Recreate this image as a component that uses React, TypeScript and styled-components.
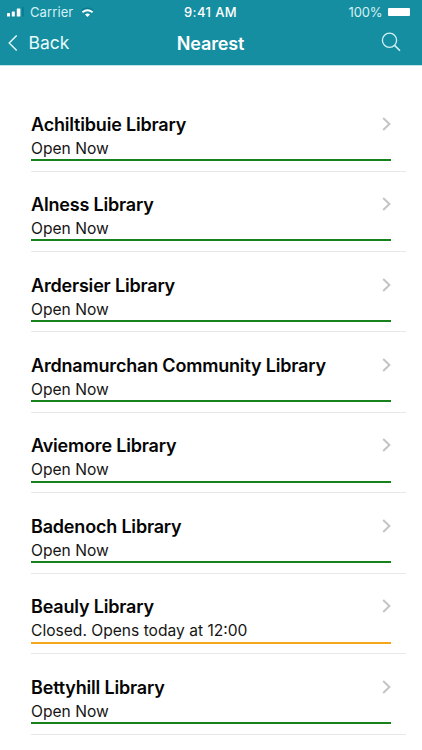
import React from "react";
import styled, { createGlobalStyle } from "styled-components";

const GlobalStyle = createGlobalStyle`
  * { box-sizing: border-box; }
  body { margin: 0; background: #fff; overflow: hidden; font-family: Inter, "Liberation Sans", sans-serif; }
`;

const Screen = styled.div`
  width: 422px;
  height: 750px;
  overflow: hidden;
  background: #fff;
`;

const Header = styled.header`
  height: 66px;
  background: #158ea1;
  border-bottom: 1px solid #bfe6ea;
  color: #fff;
`;

const StatusBar = styled.div`
  display: grid;
  grid-template-columns: 1fr auto 1fr;
  align-items: center;
  height: 24px;
  padding: 0 12px 0 7px;
  font-size: 13px;
  line-height: 24px;
`;

const StatusGroup = styled.div<{ $end?: boolean }>`
  display: flex;
  align-items: center;
  justify-content: ${(p) => (p.$end ? "flex-end" : "flex-start")};
  color: #d5f1f4;
  letter-spacing: ${(p) => (p.$end ? "-0.1px" : "0.1px")};
`;

const Clock = styled.span`
  margin-left: 4px;
  font-weight: 500;
  letter-spacing: 0.4px;
`;

const SignalIcon = styled.svg`
  margin-right: 6px;
`;

const WifiIcon = styled.svg`
  margin-left: 8px;
`;

const Battery = styled.span`
  width: 22.5px;
  height: 8px;
  margin-left: 5px;
  border-radius: 1px;
  background: #fff;
`;

const NavBar = styled.nav`
  display: grid;
  grid-template-columns: 1fr auto 1fr;
  align-items: center;
  height: 38px;
  padding: 0 21px 0 8px;
`;

const BackButton = styled.button`
  display: flex;
  align-items: center;
  gap: 10.5px;
  padding: 0;
  border: 0;
  background: none;
  color: #e9fbfc;
  font: 400 17.5px/24px Inter, sans-serif;
`;

const Title = styled.h1`
  margin: 1px 0 0 12px;
  font-size: 18px;
  font-weight: 600;
  letter-spacing: -0.15px;
  line-height: 24px;
`;

const SearchButton = styled.button`
  display: flex;
  justify-self: end;
  margin-top: -2px;
  padding: 0;
  border: 0;
  background: none;
`;

const List = styled.ul`
  margin: 0;
  padding: 25.2px 16px 0 31px;
  list-style: none;
`;

const Row = styled.li`
  height: 80.43px;
  padding: 21.6px 15px 0 0;
  border-bottom: 1px solid #e6e8ea;
`;

const NameLine = styled.div`
  display: flex;
  align-items: center;
  justify-content: space-between;
  height: 24px;
`;

const Name = styled.h2`
  margin: 0;
  color: #050505;
  font-size: 18px;
  font-weight: 600;
  letter-spacing: -0.19px;
  line-height: 24px;
`;

const Status = styled.div<{ $open: boolean }>`
  height: 24.2px;
  color: #151515;
  font-size: 15.6px;
  line-height: 24.8px;
  border-bottom: 2px solid ${(p) => (p.$open ? "#16821c" : "#f5a71c")};
`;

const Chevron = styled.svg`
  margin-bottom: 2px;
`;

const libraries = [
  { name: "Achiltibuie Library", status: "Open Now", open: true },
  { name: "Alness Library", status: "Open Now", open: true },
  { name: "Ardersier Library", status: "Open Now", open: true },
  { name: "Ardnamurchan Community Library", status: "Open Now", open: true },
  { name: "Aviemore Library", status: "Open Now", open: true },
  { name: "Badenoch Library", status: "Open Now", open: true },
  { name: "Beauly Library", status: "Closed. Opens today at 12:00", open: false },
  { name: "Bettyhill Library", status: "Open Now", open: true },
];

export default function App() {
  return (
    <Screen>
      <GlobalStyle />
      <Header>
        <StatusBar>
          <StatusGroup>
            <SignalIcon width="17" height="10" viewBox="0 0 17 10">
              <rect x="0" y="6" width="3" height="3.5" rx=".6" fill="#fff" />
              <rect x="4.8" y="4.5" width="3" height="5" rx=".6" fill="#fff" />
              <rect x="9.8" y="1.5" width="3.6" height="8" rx=".6" fill="#fff" />
              <rect x="15" y="0" width="2" height="9.5" fill="#0c7e91" />
            </SignalIcon>
            <span>Carrier</span>
            <WifiIcon width="13" height="10" viewBox="0 0 13 10">
              <path d="M.8 3.2Q6.5-1 12.2 3.2" fill="none" stroke="#0b7789" strokeWidth="1.2" />
              <path d="M1.4 5.2Q6.5 1.2 11.6 5.2" fill="none" stroke="#fff" strokeWidth="1.8" />
              <path d="M4 7.4Q6.5 5.4 9 7.4L6.5 9.9Z" fill="#fff" />
            </WifiIcon>
          </StatusGroup>
          <Clock>9:41 AM</Clock>
          <StatusGroup $end>
            <span>100%</span>
            <Battery />
          </StatusGroup>
        </StatusBar>
        <NavBar>
          <BackButton>
            <svg width="10" height="17" viewBox="0 0 10 17" fill="none" stroke="#e3f8fa" strokeWidth="1.4">
              <path d="M8.7 .4L1.2 8L8.7 15.6" />
            </svg>
            Back
          </BackButton>
          <Title>Nearest</Title>
          <SearchButton aria-label="Search">
            <svg width="20" height="20" viewBox="0 0 20 20" fill="none" stroke="#d3f2f5" strokeWidth="1.3">
              <circle cx="8.5" cy="8.3" r="7.1" />
              <path d="M13.6 13.4L19 18.8" strokeWidth="1.5" />
            </svg>
          </SearchButton>
        </NavBar>
      </Header>
      <List>
        {libraries.map((library) => (
          <Row key={library.name}>
            <NameLine>
              <Name>{library.name}</Name>
              <Chevron width="9" height="14" viewBox="0 0 9 14" fill="none" stroke="#c4c4c7" strokeWidth="2">
                <path d="M1.2 1L7.4 7L1.2 13" />
              </Chevron>
            </NameLine>
            <Status $open={library.open}>{library.status}</Status>
          </Row>
        ))}
      </List>
    </Screen>
  );
}
